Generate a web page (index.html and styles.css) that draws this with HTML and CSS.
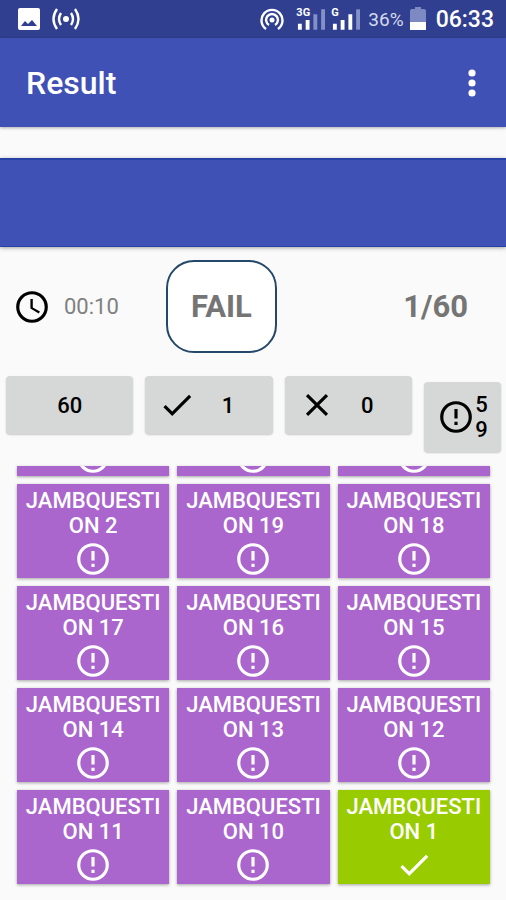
FILE: index.html
```html
<!DOCTYPE html>
<html lang="en">

<head>
    <meta charset="UTF-8" />
    <meta name="viewport" content="width=device-width, initial-scale=1.0" />
    <title>Result</title>
    <link rel="stylesheet" href="styles.css">
</head>

<body>
    <!-- Shared icons -->
    <svg class="sprite" aria-hidden="true">
        <symbol id="alert" viewBox="0 0 24 24">
            <circle cx="12" cy="12" r="9" fill="none" stroke="currentColor" stroke-width="2" />
            <path d="M11 15h2v2h-2zM11 7h2v6h-2z" fill="currentColor" />
        </symbol>
        <symbol id="check" viewBox="0 0 24 24">
            <path d="M9 16.17L4.83 12l-1.42 1.41L9 19 21 7l-1.41-1.41z" fill="currentColor" />
        </symbol>
        <symbol id="cross" viewBox="0 0 24 24">
            <path d="M19 6.41L17.59 5 12 10.59 6.41 5 5 6.41 10.59 12 5 17.59 6.41 19 12 13.41 17.59 19 19 17.59 13.41 12z" fill="currentColor" />
        </symbol>
        <symbol id="clock" viewBox="0 0 24 24">
            <circle cx="12" cy="12" r="9" fill="none" stroke="currentColor" stroke-width="2" />
            <path d="M12.5 7H11v6l5.25 3.15.75-1.23-4.5-2.67z" fill="currentColor" />
        </symbol>
    </svg>

    <div class="status-bar">
        <svg class="status-image" viewBox="0 0 22 22">
            <path fill="#fff" fill-rule="evenodd" d="M2 0h18a2 2 0 0 1 2 2v18a2 2 0 0 1-2 2H2a2 2 0 0 1-2-2V2a2 2 0 0 1 2-2zM3 18h16l-5-6-4 4-3-3z" />
        </svg>
        <svg class="status-cast" viewBox="0 0 28 22" fill="none" stroke="#fff" stroke-width="2.4">
            <circle cx="14" cy="11" r="3" fill="#fff" stroke="none" />
            <path d="M9 5q-4 6 0 12M19 5q4 6 0 12M5 1q-7 10 0 20M23 1q7 10 0 20" />
        </svg>
        <svg class="status-hotspot" viewBox="0 0 24 24" fill="none" stroke="#fff" stroke-width="2.4">
            <circle cx="12" cy="13" r="2.5" fill="#fff" stroke="none" />
            <path d="M9 18a5.9 5.9 0 1 1 6 0M6 22a10.500 10.500 0 1 1 12 0" />
        </svg>
        <div class="signal">
            <span class="network">3G</span>
            <svg viewBox="0 0 30 24">
                <path fill="#fff" d="M2 17h4v6H2zM10 13h4v10h-4z" />
                <path fill="#8490c8" d="M18 7h4v16h-4zM26 2h4v21h-4z" />
            </svg>
        </div>
        <div class="signal">
            <span class="network">G</span>
            <svg viewBox="0 0 30 24">
                <path fill="#fff" d="M2 17h4v6H2zM10 13h4v10h-4zM18 7h4v16h-4z" />
                <path fill="#8490c8" d="M26 2h4v21h-4z" />
            </svg>
        </div>
        <span class="percent">36%</span>
        <svg class="battery" viewBox="0 0 16 24">
            <path fill="#7d89c2" d="M5 0h6v2h3a2 2 0 0 1 2 2v12H0V4a2 2 0 0 1 2-2h3z" />
            <path fill="#fff" d="M0 15h16v8H0z" />
        </svg>
        <span class="time">06:33</span>
    </div>

    <header class="app-bar">
        <h1>Result</h1>
        <button class="menu" aria-haspopup="true">
            <svg viewBox="0 0 8 28" fill="#fff">
                <circle cx="4" cy="4" r="3.600" />
                <circle cx="4" cy="14" r="3.600" />
                <circle cx="4" cy="24" r="3.600" />
            </svg>
        </button>
    </header>

    <div class="banner"></div>

    <section class="summary">
        <div class="elapsed">
            <svg class="icon"><use href="#clock" /></svg>
            <span>00:10</span>
        </div>
        <div class="verdict">FAIL</div>
        <div class="score">1/60</div>
    </section>

    <section class="filters">
        <button class="filter"><span>60</span></button>
        <button class="filter"><svg class="icon"><use href="#check" /></svg><span>1</span></button>
        <button class="filter"><svg class="icon"><use href="#cross" /></svg><span>0</span></button>
        <button class="filter filter-skipped"><svg class="icon"><use href="#alert" /></svg><span>59</span></button>
    </section>

    <main class="questions">
        <div class="tile tile-cut"><svg class="icon"><use href="#alert" /></svg></div>
        <div class="tile tile-cut"><svg class="icon"><use href="#alert" /></svg></div>
        <div class="tile tile-cut"><svg class="icon"><use href="#alert" /></svg></div>

        <button class="tile">JAMBQUESTION 2<svg class="icon"><use href="#alert" /></svg></button>
        <button class="tile">JAMBQUESTION 19<svg class="icon"><use href="#alert" /></svg></button>
        <button class="tile">JAMBQUESTION 18<svg class="icon"><use href="#alert" /></svg></button>

        <button class="tile">JAMBQUESTION 17<svg class="icon"><use href="#alert" /></svg></button>
        <button class="tile">JAMBQUESTION 16<svg class="icon"><use href="#alert" /></svg></button>
        <button class="tile">JAMBQUESTION 15<svg class="icon"><use href="#alert" /></svg></button>

        <button class="tile">JAMBQUESTION 14<svg class="icon"><use href="#alert" /></svg></button>
        <button class="tile">JAMBQUESTION 13<svg class="icon"><use href="#alert" /></svg></button>
        <button class="tile">JAMBQUESTION 12<svg class="icon"><use href="#alert" /></svg></button>

        <button class="tile">JAMBQUESTION 11<svg class="icon"><use href="#alert" /></svg></button>
        <button class="tile">JAMBQUESTION 10<svg class="icon"><use href="#alert" /></svg></button>
        <button class="tile correct">JAMBQUESTION 1<svg class="icon"><use href="#check" /></svg></button>
    </main>
</body>

</html>
```

FILE: styles.css
```css
* {
    box-sizing: border-box;
    margin: 0;
    padding: 0;
}

body {
    font-family: Roboto, sans-serif;
    background-color: #fafafa;
    color: #757575;
}

button {
    font-family: inherit;
    border: none;
    cursor: pointer;
}

.sprite {
    display: none;
}

.icon {
    display: block;
    flex: none;
    width: 38px;
    height: 38px;
}

/* Status bar */
.status-bar {
    display: flex;
    align-items: center;
    height: 38px;
    padding: 0 12px 0 18px;
    background-color: #303f8f;
    color: #fff;
}

.status-image {
    width: 22px;
    height: 22px;
    margin-right: 12px;
}

.status-cast {
    width: 28px;
    height: 22px;
}

.status-hotspot {
    width: 24px;
    height: 24px;
    margin-left: auto;
    margin-right: 12px;
}

.signal {
    position: relative;
    height: 24px;
    margin-right: 6px;
}

.signal svg {
    display: block;
    width: 29px;
    height: 24px;
}

.network {
    position: absolute;
    top: 0;
    left: 0;
    font-size: 11px;
    font-weight: 700;
    line-height: 11px;
}

.percent {
    margin: 0 6px 0 2px;
    font-size: 19px;
    color: #d5d9ee;
}

.battery {
    width: 16px;
    height: 24px;
    margin-right: 10px;
}

.time {
    font-size: 23px;
    font-weight: 500;
}

/* App bar */
.app-bar {
    display: flex;
    align-items: center;
    justify-content: space-between;
    height: 89px;
    padding: 0 26px;
    background-color: #3f51b5;
    box-shadow: 0 1px 3px rgba(0, 0, 0, 0.3);
    color: #fff;
}

.app-bar h1 {
    font-size: 32px;
    font-weight: 500;
}

.menu {
    padding: 4px;
    background: none;
}

.menu svg {
    display: block;
    width: 8px;
    height: 28px;
}

.banner {
    height: 89px;
    margin-top: 31px;
    border: solid #2742a6;
    border-width: 2px 0 1px;
    background-color: #3f51b5;
    box-shadow: 0 1px 4px rgba(0, 0, 0, 0.35);
}

/* Time, verdict and score */
.summary {
    display: grid;
    grid-template-columns: 4fr 111px 5fr;
    align-items: center;
    margin-top: 13px;
    padding: 0 38px 0 13px;
}

.elapsed {
    display: flex;
    align-items: center;
    gap: 13px;
    font-size: 22px;
    color: #808080;
}

.elapsed .icon {
    color: #000;
}

.verdict {
    padding: 25px 0;
    border: 2px solid #24486a;
    border-radius: 28px;
    background-color: #fff;
    font-size: 31px;
    font-weight: 700;
    line-height: 39px;
    text-align: center;
}

.score {
    font-size: 31px;
    font-weight: 700;
    text-align: right;
}

/* Filter buttons */
.filters {
    display: flex;
    align-items: flex-start;
    gap: 12px;
    margin-top: 23px;
    padding: 0 5px 0 6px;
}

.filter {
    display: flex;
    flex: 1;
    align-items: center;
    min-height: 58px;
    padding: 10px 13px;
    border-radius: 4px;
    background-color: #d6d7d7;
    box-shadow: 0 1px 2px rgba(0, 0, 0, 0.2);
    color: #000;
    font-size: 22px;
    font-weight: 500;
    line-height: 25px;
}

.filter span {
    flex: 1;
    word-break: break-all;
}

.filter-skipped {
    flex: none;
    margin-top: 6px;
}

.filter-skipped span {
    flex: 0 0 13px;
}

/* Question grid */
.questions {
    display: grid;
    grid-template-columns: repeat(3, 1fr);
    gap: 8px;
    margin-top: 14px;
    padding: 0 16px 16px 17px;
}

.tile {
    display: block;
    height: 94px;
    padding: 3px 7px 0;
    background-color: #aa66cc;
    box-shadow: 0 1px 3px rgba(0, 0, 0, 0.35);
    color: #fff;
    font-size: 22px;
    font-weight: 500;
    line-height: 25px;
    text-align: center;
    word-break: break-all;
}

.tile .icon {
    margin: 2px auto 0;
}

/* Row scrolled under the filters */
.tile-cut {
    display: flex;
    align-items: flex-end;
    justify-content: center;
    height: 10px;
    padding: 0;
    overflow: hidden;
}

.correct {
    background-color: #99cc00;
}
```
